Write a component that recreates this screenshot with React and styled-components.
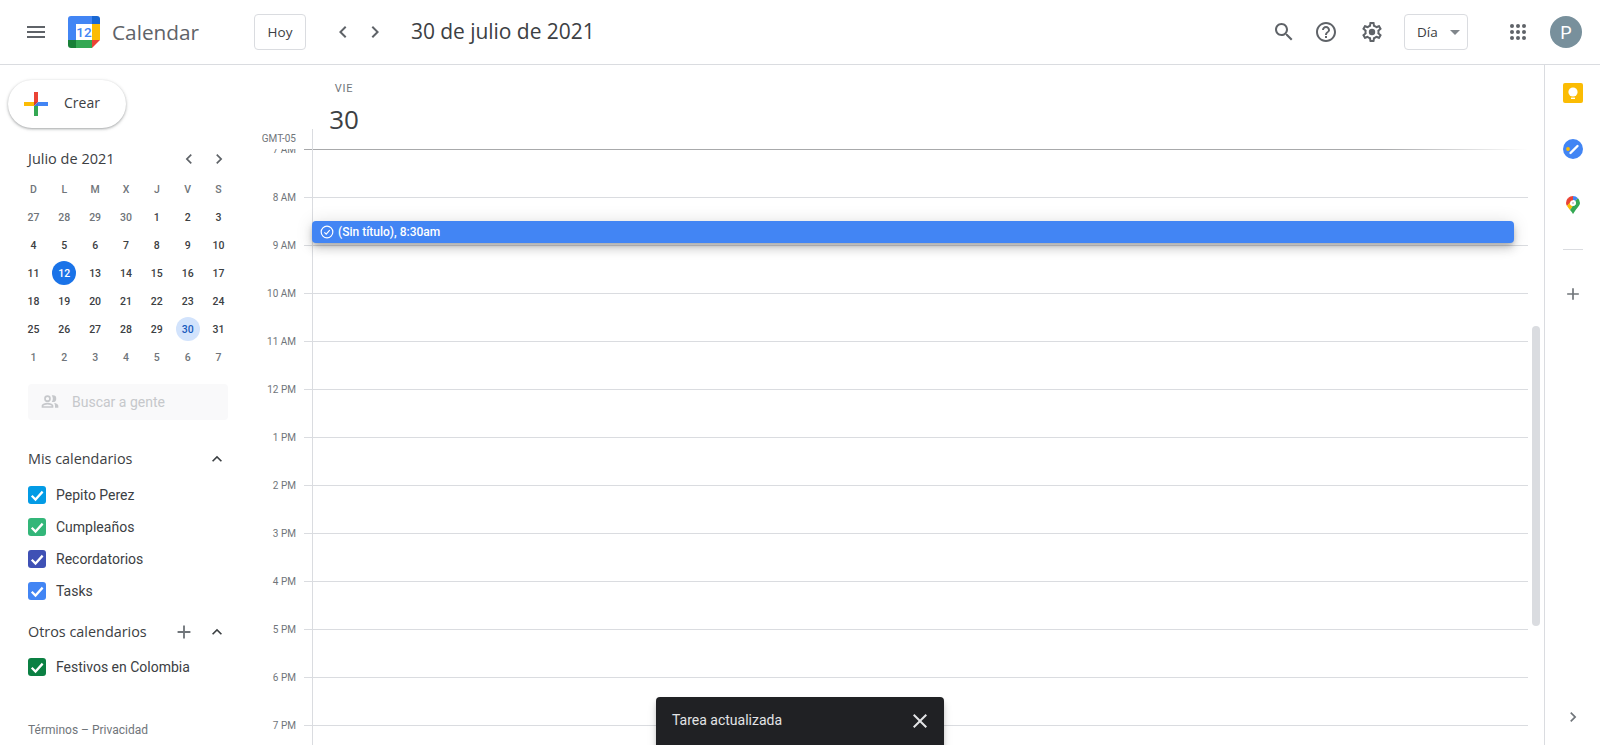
import styled, { createGlobalStyle } from "styled-components";

const GlobalStyle = createGlobalStyle`
  html, body {
    margin: 0;
    height: 100%;
    overflow: hidden;
    background: #fff;
    font-family: Roboto, "Liberation Sans", sans-serif;
    color: #3c4043;
  }
  * { box-sizing: border-box; }
`;

const TITLE_FONT = `"Open Sans", Roboto, sans-serif`;

const Page = styled.div`
  position: relative;
  width: 1600px;
  height: 745px;
  overflow: hidden;
  display: flex;
  flex-direction: column;
`;

const TopBar = styled.header`
  height: 65px;
  flex: none;
  display: flex;
  align-items: center;
  padding: 0 18px 0 24px;
  border-bottom: 1px solid #dadce0;
`;

const Brand = styled.div`
  width: 230px;
  display: flex;
  align-items: center;
`;

const Spacer = styled.span`
  width: ${(p) => p.$w}px;
  flex: none;
`;

const BrandName = styled.span`
  font-family: ${TITLE_FONT};
  font-size: 20.8px;
  color: #5f6368;
  margin-left: 12px;
`;

const OutlineBtn = styled.button`
  height: 36px;
  width: ${(p) => p.$w}px;
  display: flex;
  align-items: center;
  justify-content: ${(p) => (p.$select ? "flex-start" : "center")};
  padding: ${(p) => (p.$select ? "0 0 0 12px" : "0")};
  background: #fff;
  border: 1px solid #dadce0;
  border-radius: 4px;
  font-family: ${TITLE_FONT};
  font-size: 13.5px;
  font-weight: 500;
  color: #3c4043;
`;

const Caret = styled.span`
  width: 0;
  height: 0;
  margin-left: 12px;
  border-left: 5px solid transparent;
  border-right: 5px solid transparent;
  border-top: 5px solid #80868b;
`;

const NavGroup = styled.div`
  display: flex;
  gap: 8px;
  margin: 0 24px 0 25px;
`;

const DateTitle = styled.h1`
  margin: 0 0 2px;
  font-family: ${TITLE_FONT};
  font-size: 21px;
  letter-spacing: -0.05px;
  font-weight: 400;
  color: #3c4043;
`;

const Tools = styled.div`
  margin-left: auto;
  display: flex;
  align-items: center;
`;

const ToolBtn = styled.span`
  width: ${(p) => p.$w}px;
  display: flex;
  justify-content: center;
  color: #5f6368;
`;

const Avatar = styled.span`
  width: 32px;
  height: 32px;
  margin-left: 20px;
  border-radius: 50%;
  background: #78909c;
  color: #fff;
  display: flex;
  align-items: center;
  justify-content: center;
  font-size: 18px;
`;

const Body = styled.div`
  flex: 1;
  min-height: 0;
  display: flex;
`;

const Sidebar = styled.aside`
  width: 256px;
  flex: none;
  display: flex;
  flex-direction: column;
`;

const CreateBtn = styled.button`
  width: 118px;
  height: 48px;
  margin: 15px 0 0 8px;
  padding: 0 0 0 16px;
  display: flex;
  align-items: center;
  gap: 16px;
  background: #fff;
  border: none;
  border-radius: 24px;
  box-shadow: 0 1px 2px 0 rgba(60, 64, 67, 0.3), 0 1px 3px 1px rgba(60, 64, 67, 0.15);
  font-family: ${TITLE_FONT};
  font-size: 14px;
  font-weight: 500;
  color: #3c4043;
`;

const CreateLabel = styled.span`
  margin-bottom: 3px;
`;

const MiniCal = styled.section`
  margin: 17px 0 0 18px;
  width: 216px;
`;

const MiniHead = styled.div`
  height: 28px;
  margin-bottom: 2px;
  display: flex;
  align-items: center;
  padding-left: 10px;
  color: #3c4043;
`;

const MonthName = styled.span`
  font-family: ${TITLE_FONT};
  font-size: 14.5px;
  flex: 1;
  margin-bottom: 2px;
`;

const MiniNav = styled.span`
  display: flex;
  gap: 10px;
  color: #5f6368;
  margin-right: 5px;
`;

const MiniGrid = styled.div`
  display: grid;
  grid-template-columns: repeat(7, 30.85px);
  grid-auto-rows: 28px;
  font-size: 10.5px;
  font-weight: 500;
`;

const Weekday = styled.span`
  display: flex;
  align-items: center;
  justify-content: center;
  color: #70757a;
`;

const DayCell = styled.span`
  display: flex;
  align-items: center;
  justify-content: center;
  color: ${(p) => (p.$today ? "#fff" : p.$selected ? "#185abc" : p.$muted ? "#70757a" : "#3c4043")};
  & > span {
    width: 24px;
    height: 24px;
    border-radius: 50%;
    display: flex;
    align-items: center;
    justify-content: center;
    background: ${(p) => (p.$today ? "#1a73e8" : p.$selected ? "#d2e3fc" : "transparent")};
  }
`;

const PeopleSearch = styled.div`
  width: 200px;
  height: 36px;
  margin: 13px 0 0 28px;
  padding-left: 12px;
  display: flex;
  align-items: center;
  gap: 12px;
  border-radius: 4px;
  background: #f9f9fa;
  color: #c6c8cb;
  font-size: 14px;
`;

const SectionHead = styled.div`
  height: 24px;
  margin: ${(p) => p.$top}px 0 0 28px;
  width: 199px;
  display: flex;
  align-items: center;
  font-family: ${TITLE_FONT};
  font-size: 14.4px;
  font-weight: 500;
  color: #3c4043;
`;

const SectionTitle = styled.span`
  flex: 1;
  margin-bottom: 2px;
`;

const SectionIcon = styled.span`
  display: flex;
  color: ${(p) => p.$color};
  margin-right: ${(p) => p.$gap || 0}px;
`;

const CalList = styled.ul`
  list-style: none;
  margin: ${(p) => p.$top}px 0 0 28px;
  padding: 0;
`;

const CalRow = styled.li`
  height: 32px;
  display: flex;
  align-items: center;
  gap: 10px;
  font-size: 14px;
  color: #3c4043;
`;

const CheckBox = styled.span`
  width: 18px;
  height: 18px;
  border-radius: 3px;
  background: ${(p) => p.$color};
  display: flex;
  align-items: center;
  justify-content: center;
`;

const Footer = styled.div`
  margin: auto 0 8px 28px;
  font-size: 12px;
  color: #70757a;
`;

const Main = styled.main`
  flex: 1;
  min-width: 0;
  display: flex;
  flex-direction: column;
`;

const DayHead = styled.div`
  height: 64px;
  flex: none;
  width: 64px;
  margin-left: 56px;
  padding-top: 17px;
  display: flex;
  flex-direction: column;
  align-items: center;
`;

const DayName = styled.span`
  font-size: 11px;
  font-weight: 400;
  letter-spacing: 0.8px;
  color: #70757a;
`;

const DayNumber = styled.span`
  margin-top: 8px;
  font-family: ${TITLE_FONT};
  font-size: 26px;
  line-height: 32px;
  color: #3c4043;
`;

const AllDayRow = styled.div`
  height: 20px;
  flex: none;
  display: flex;
`;

const Zone = styled.span`
  width: 56px;
  padding-right: 16px;
  text-align: right;
  font-size: 10px;
  line-height: 20px;
  color: #70757a;
`;

const AllDayCell = styled.div`
  flex: 1;
  border-left: 1px solid #dadce0;
`;

const Scroller = styled.div`
  flex: 1;
  min-height: 0;
  display: flex;
`;

const Hours = styled.div`
  position: relative;
  flex: 1;
  overflow: hidden;
`;

const HourRow = styled.div`
  height: 48px;
  display: flex;
`;

const HourLabel = styled.span`
  width: 40px;
  margin-right: 8px;
  text-align: right;
  font-size: 10px;
  line-height: 14px;
  height: 14px;
  transform: translateY(-6px);
  color: #70757a;
`;

const Tick = styled.span`
  width: 8px;
  border-top: 1px solid ${(p) => (p.$first ? "#a8a9ab" : "#dadce0")};
`;

const HourCell = styled.div`
  flex: 1;
  border-left: 1px solid #dadce0;
  ${(p) =>
    p.$first
      ? `background: linear-gradient(to right, #a8a9ab 88%, rgba(168,169,171,0)) top left / 100% 1px no-repeat;`
      : `border-top: 1px solid #dadce0;`}
`;

const EventChip = styled.div`
  position: absolute;
  left: 56px;
  top: 72px;
  width: 1202px;
  height: 22px;
  padding-left: 8px;
  display: flex;
  align-items: center;
  gap: 4px;
  border-radius: 4px;
  background: #4285f4;
  color: #fff;
  font-size: 12px;
  font-weight: 500;
  box-shadow: 0 6px 10px 0 rgba(0, 0, 0, 0.14), 0 1px 18px 0 rgba(0, 0, 0, 0.12), 0 3px 5px -1px rgba(0, 0, 0, 0.2);
`;

const ScrollTrack = styled.div`
  width: 16px;
  flex: none;
  padding: 177px 4px 0;
`;

const ScrollThumb = styled.div`
  height: 300px;
  border-radius: 4px;
  background: #dadce0;
`;

const Rail = styled.aside`
  width: 56px;
  flex: none;
  display: flex;
  flex-direction: column;
  align-items: center;
  border-left: 1px solid #dadce0;
`;

const RailSlot = styled.span`
  height: 56px;
  display: flex;
  align-items: center;
  color: #70757a;
  ${(p) => p.$bottom && "margin-top: auto;"}
`;

const RailDivider = styled.hr`
  width: 20px;
  margin: 16px 0;
  border: none;
  border-top: 1px solid #dadce0;
`;

const Toast = styled.div`
  position: absolute;
  left: 656px;
  top: 697px;
  width: 288px;
  height: 60px;
  padding: 0 12px 12px 16px;
  display: flex;
  align-items: center;
  justify-content: space-between;
  border-radius: 4px;
  background: #202124;
  color: #e3e4e6;
  font-size: 14px;
  box-shadow: 0 3px 5px -1px rgba(0, 0, 0, 0.2), 0 6px 10px 0 rgba(0, 0, 0, 0.14);
`;

const ToastText = styled.span`
  margin-bottom: 2px;
`;

const Icon = ({ d, size = 24, children }) => (
  <svg width={size} height={size} viewBox="0 0 24 24" fill="currentColor">
    {d && <path d={d} />}
    {children}
  </svg>
);

const paths = {
  menu: "M3 18h18v-2H3v2zm0-5h18v-2H3v2zm0-7v2h18V6H3z",
  left: "M15.41 7.41L14 6l-6 6 6 6 1.41-1.41L10.83 12z",
  right: "M10 6L8.59 7.41 13.17 12l-4.58 4.58L10 18l6-6z",
  up: "M7.41 15.41L12 10.83l4.59 4.58L18 14l-6-6-6 6z",
  plus: "M19 13h-6v6h-2v-6H5v-2h6V5h2v6h6v2z",
  close: "M19 6.41L17.59 5 12 10.59 6.41 5 5 6.41 10.59 12 5 17.59 6.41 19 12 13.41 17.59 19 19 17.59 13.41 12z",
  search: "M15.5 14h-.79l-.28-.27C15.41 12.59 16 11.11 16 9.5 16 5.91 13.09 3 9.5 3S3 5.91 3 9.5 5.91 16 9.5 16c1.61 0 3.09-.59 4.23-1.57l.27.28v.79l5 4.99L20.49 19l-4.99-5zm-6 0C7.01 14 5 11.99 5 9.5S7.01 5 9.5 5 14 7.01 14 9.5 11.99 14 9.5 14z",
  help: "M11 18h2v-2h-2v2zm1-16C6.48 2 2 6.48 2 12s4.48 10 10 10 10-4.48 10-10S17.52 2 12 2zm0 18c-4.41 0-8-3.59-8-8s3.59-8 8-8 8 3.59 8 8-3.59 8-8 8zm0-14c-2.21 0-4 1.79-4 4h2c0-1.1.9-2 2-2s2 .9 2 2c0 2-3 1.75-3 5h2c0-2.25 3-2.5 3-5 0-2.21-1.79-4-4-4z",
  gear: "M19.43 12.98c.04-.32.07-.64.07-.98s-.03-.66-.07-.98l2.11-1.65c.19-.15.24-.42.12-.64l-2-3.46c-.12-.22-.39-.3-.61-.22l-2.49 1c-.52-.4-1.08-.73-1.69-.98l-.38-2.65C14.46 2.18 14.25 2 14 2h-4c-.25 0-.46.18-.49.42l-.38 2.65c-.61.25-1.17.59-1.69.98l-2.49-1c-.23-.09-.49 0-.61.22l-2 3.46c-.13.22-.07.49.12.64l2.11 1.65c-.04.32-.07.65-.07.98s.03.66.07.98l-2.11 1.65c-.19.15-.24.42-.12.64l2 3.46c.12.22.39.3.61.22l2.49-1c.52.4 1.08.73 1.69.98l.38 2.65c.03.24.24.42.49.42h4c.25 0 .46-.18.49-.42l.38-2.65c.61-.25 1.17-.59 1.69-.98l2.49 1c.23.09.49 0 .61-.22l2-3.46c.12-.22.07-.49-.12-.64l-2.11-1.65zM17.45 11.27c.04.31.05.52.05.73 0 .21-.02.43-.05.73l-.14 1.13.89.7 1.08.84-.7 1.21-1.27-.51-1.04-.42-.9.68c-.43.32-.84.56-1.25.73l-1.06.43-.16 1.13-.2 1.35h-1.4l-.19-1.35-.16-1.13-1.06-.43c-.43-.18-.83-.41-1.23-.71l-.91-.7-1.06.43-1.27.51-.7-1.21 1.08-.84.89-.7-.14-1.13c-.03-.31-.05-.54-.05-.74s.02-.43.05-.73l.14-1.13-.89-.7-1.08-.84.7-1.21 1.27.51 1.04.42.9-.68c.43-.32.84-.56 1.25-.73l1.06-.43.16-1.13.2-1.35h1.39l.19 1.35.16 1.13 1.06.43c.43.18.83.41 1.23.71l.91.7 1.06-.43 1.27-.51.7 1.21-1.07.85-.89.7.14 1.13z",
  people: "M9 13c2.33 0 7 1.17 7 3.5V19H2v-2.5C2 14.17 6.67 13 9 13zm0-9a4 4 0 110 8 4 4 0 010-8zm0 2a2 2 0 100 4 2 2 0 000-4zm0 9c-2.2 0-5 1-5 1.5V17h10v-.5c0-.5-2.8-1.5-5-1.5zm6.5-11a4 4 0 010 8c-.5 0-1-.1-1.4-.3.8-1 1.3-2.3 1.3-3.7s-.5-2.7-1.3-3.7c.4-.2.9-.3 1.4-.3zM17 13.1c2.5.4 5 1.5 5 3.4V19h-4v-2.5c0-1.4-.4-2.5-1-3.4z",
};

const CalendarLogo = () => (
  <svg width="32" height="32" viewBox="0 0 32 32">
    <path d="M8 0h16v8H8z" fill="#4285f4" />
    <path d="M0 3a3 3 0 013-3h5v8H0z" fill="#4285f4" />
    <path d="M0 8h8v16H0z" fill="#4285f4" />
    <path d="M24 0h5a3 3 0 013 3v5h-8z" fill="#1967d2" />
    <path d="M24 8h8v16h-8z" fill="#fbbc04" />
    <path d="M8 24h16v8H8z" fill="#34a853" />
    <path d="M0 24h8v8H3a3 3 0 01-3-3z" fill="#188038" />
    <path d="M24 24h8l-8 8z" fill="#ea4335" />
    <rect x="8" y="8" width="16" height="16" fill="#fff" />
    <text x="16" y="21" textAnchor="middle" fontFamily="Roboto, sans-serif" fontSize="13.5" fontWeight="500" fill="#4285f4">12</text>
  </svg>
);

const CreatePlus = () => (
  <svg width="24" height="24" viewBox="0 0 24 24">
    <path fill="#34a853" d="M10 14h4v10h-4z" />
    <path fill="#4285f4" d="M14 10h10v4H14z" />
    <path fill="#fbbc05" d="M0 10h10v4H0z" />
    <path fill="#ea4335" d="M10 0h4v10h-4z" />
    <path fill="#d93a2d" d="M10 10h4l-4 4z" />
    <path fill="#3b78e0" d="M14 10v4h-4z" />
  </svg>
);

const KeepIcon = () => (
  <svg width="20" height="20" viewBox="0 0 20 20">
    <rect width="20" height="20" rx="2" fill="#fbbc04" />
    <circle cx="10" cy="9" r="4.6" fill="#fff" />
    <rect x="8" y="14.6" width="4" height="1.4" fill="#fff" />
  </svg>
);

const TasksIcon = () => (
  <svg width="20" height="20" viewBox="0 0 20 20">
    <circle cx="10" cy="10" r="10" fill="#4285f4" />
    <circle cx="5" cy="10" r="1.9" fill="#fbbc04" />
    <path d="M7.5 14l7-7" stroke="#fff" strokeWidth="2.4" strokeLinecap="round" />
  </svg>
);

const MapsIcon = () => (
  <svg width="14" height="18" viewBox="0 0 14 18">
    <path d="M7 0a7 7 0 00-5 2.1l5 4.9V0z" fill="#ea4335" />
    <path d="M7 0v4a3 3 0 012.2 1L12 2.2A7 7 0 007 0z" fill="#4285f4" />
    <path d="M12 2.2L9.2 5A3 3 0 017 10l-1 1 1 7 3-4.5c2-2.6 4-4.4 4-6.5a7 7 0 00-2-4.8z" fill="#34a853" />
    <path d="M2 2.1A7 7 0 000 7c0 1 .4 2 1 3l4-4a3 3 0 012-2L2 2.1z" fill="#ea4335" />
    <path d="M1 10c.8 1.4 2 2.6 3 3.9L7 10a3 3 0 01-3-3c0-.4.1-.7.2-1z" fill="#fbbc04" />
    <path d="M4 13.9c1.2 1.5 2.4 2.7 3 4.1l1-8H7z" fill="#34a853" />
    <circle cx="7" cy="7" r="2.8" fill="#fff" />
    <circle cx="7" cy="7" r="1" fill="#bdc1c6" />
  </svg>
);

const AppsIcon = () => (
  <svg width="24" height="24" viewBox="0 0 24 24" fill="currentColor">
    {[6, 12, 18].flatMap((y) =>
      [6, 12, 18].map((x) => <circle key={`${x}-${y}`} cx={x} cy={y} r="2" />)
    )}
  </svg>
);

const CheckMark = () => (
  <svg width="18" height="18" viewBox="0 0 24 24">
    <path d="M5 13l5 5 9.5-10.5" fill="none" stroke="#fff" strokeWidth="3" />
  </svg>
);

const weekdays = ["D", "L", "M", "X", "J", "V", "S"];
const monthDays = [
  27, 28, 29, 30, 1, 2, 3, 4, 5, 6, 7, 8, 9, 10, 11, 12, 13, 14, 15, 16, 17, 18, 19, 20, 21, 22,
  23, 24, 25, 26, 27, 28, 29, 30, 31, 1, 2, 3, 4, 5, 6, 7,
];

const myCalendars = [
  { name: "Pepito Perez", color: "#039be5" },
  { name: "Cumpleaños", color: "#33b679" },
  { name: "Recordatorios", color: "#3f51b5" },
  { name: "Tasks", color: "#4285f4" },
];

const hours = ["7 AM", "8 AM", "9 AM", "10 AM", "11 AM", "12 PM", "1 PM", "2 PM", "3 PM", "4 PM", "5 PM", "6 PM", "7 PM"];

const App = () => {
  return (
    <Page>
      <GlobalStyle />
      <TopBar>
        <Brand>
          <ToolBtn $w={24}><Icon d={paths.menu} /></ToolBtn>
          <Spacer $w={20} />
          <CalendarLogo />
          <BrandName>Calendar</BrandName>
        </Brand>
        <OutlineBtn $w={52}>Hoy</OutlineBtn>
        <NavGroup>
          <ToolBtn $w={24}><Icon d={paths.left} /></ToolBtn>
          <ToolBtn $w={24}><Icon d={paths.right} /></ToolBtn>
        </NavGroup>
        <DateTitle>30 de julio de 2021</DateTitle>
        <Tools>
          <ToolBtn $w={42}><Icon d={paths.search} /></ToolBtn>
          <ToolBtn $w={42}><Icon d={paths.help} /></ToolBtn>
          <ToolBtn $w={50}>
            <Icon d={paths.gear}><circle cx="12" cy="12" r="3.2" /></Icon>
          </ToolBtn>
          <Spacer $w={7} />
          <OutlineBtn $w={64} $select>Día<Caret /></OutlineBtn>
          <Spacer $w={38} />
          <ToolBtn $w={24}><AppsIcon /></ToolBtn>
          <Avatar>P</Avatar>
        </Tools>
      </TopBar>

      <Body>
        <Sidebar>
          <CreateBtn><CreatePlus /><CreateLabel>Crear</CreateLabel></CreateBtn>
          <MiniCal>
            <MiniHead>
              <MonthName>Julio de 2021</MonthName>
              <MiniNav>
                <Icon d={paths.left} size={20} />
                <Icon d={paths.right} size={20} />
              </MiniNav>
            </MiniHead>
            <MiniGrid>
              {weekdays.map((d) => <Weekday key={d}>{d}</Weekday>)}
              {monthDays.map((d, i) => (
                <DayCell key={i} $muted={i < 4 || i > 34} $today={i === 15} $selected={i === 33}>
                  <span>{d}</span>
                </DayCell>
              ))}
            </MiniGrid>
          </MiniCal>
          <PeopleSearch>
            <Icon d={paths.people} size={20} />
            Buscar a gente
          </PeopleSearch>
          <SectionHead $top={27}>
            <SectionTitle>Mis calendarios</SectionTitle>
            <SectionIcon $color="#3c4043"><Icon d={paths.up} size={20} /></SectionIcon>
          </SectionHead>
          <CalList $top={8}>
            {myCalendars.map((c) => (
              <CalRow key={c.name}>
                <CheckBox $color={c.color}><CheckMark /></CheckBox>
                {c.name}
              </CalRow>
            ))}
          </CalList>
          <SectionHead $top={13}>
            <SectionTitle>Otros calendarios</SectionTitle>
            <SectionIcon $color="#70757a" $gap={12}><Icon d={paths.plus} size={22} /></SectionIcon>
            <SectionIcon $color="#3c4043"><Icon d={paths.up} size={20} /></SectionIcon>
          </SectionHead>
          <CalList $top={7}>
            <CalRow>
              <CheckBox $color="#0b8043"><CheckMark /></CheckBox>
              Festivos en Colombia
            </CalRow>
          </CalList>
          <Footer>Términos – Privacidad</Footer>
        </Sidebar>

        <Main>
          <DayHead>
            <DayName>VIE</DayName>
            <DayNumber>30</DayNumber>
          </DayHead>
          <AllDayRow>
            <Zone>GMT-05</Zone>
            <AllDayCell />
          </AllDayRow>
          <Scroller>
            <Hours>
              {hours.map((h, i) => (
                <HourRow key={h}>
                  <HourLabel>{h}</HourLabel>
                  <Tick $first={i === 0} />
                  <HourCell $first={i === 0} />
                </HourRow>
              ))}
              <EventChip>
                <svg width="14" height="14" viewBox="0 0 24 24" fill="none" stroke="#fff" strokeWidth="2">
                  <circle cx="12" cy="12" r="10" />
                  <path d="M7.5 12.5l3.2 3.2 6-7" />
                </svg>
                (Sin título), 8:30am
              </EventChip>
            </Hours>
            <ScrollTrack><ScrollThumb /></ScrollTrack>
          </Scroller>
        </Main>

        <Rail>
          <RailSlot><KeepIcon /></RailSlot>
          <RailSlot><TasksIcon /></RailSlot>
          <RailSlot><MapsIcon /></RailSlot>
          <RailDivider />
          <RailSlot><Icon d={paths.plus} size={20} /></RailSlot>
          <RailSlot $bottom><Icon d={paths.right} size={20} /></RailSlot>
        </Rail>
      </Body>

      <Toast>
        <ToastText>Tarea actualizada</ToastText>
        <Icon d={paths.close} />
      </Toast>
    </Page>
  );
};

export default App;
